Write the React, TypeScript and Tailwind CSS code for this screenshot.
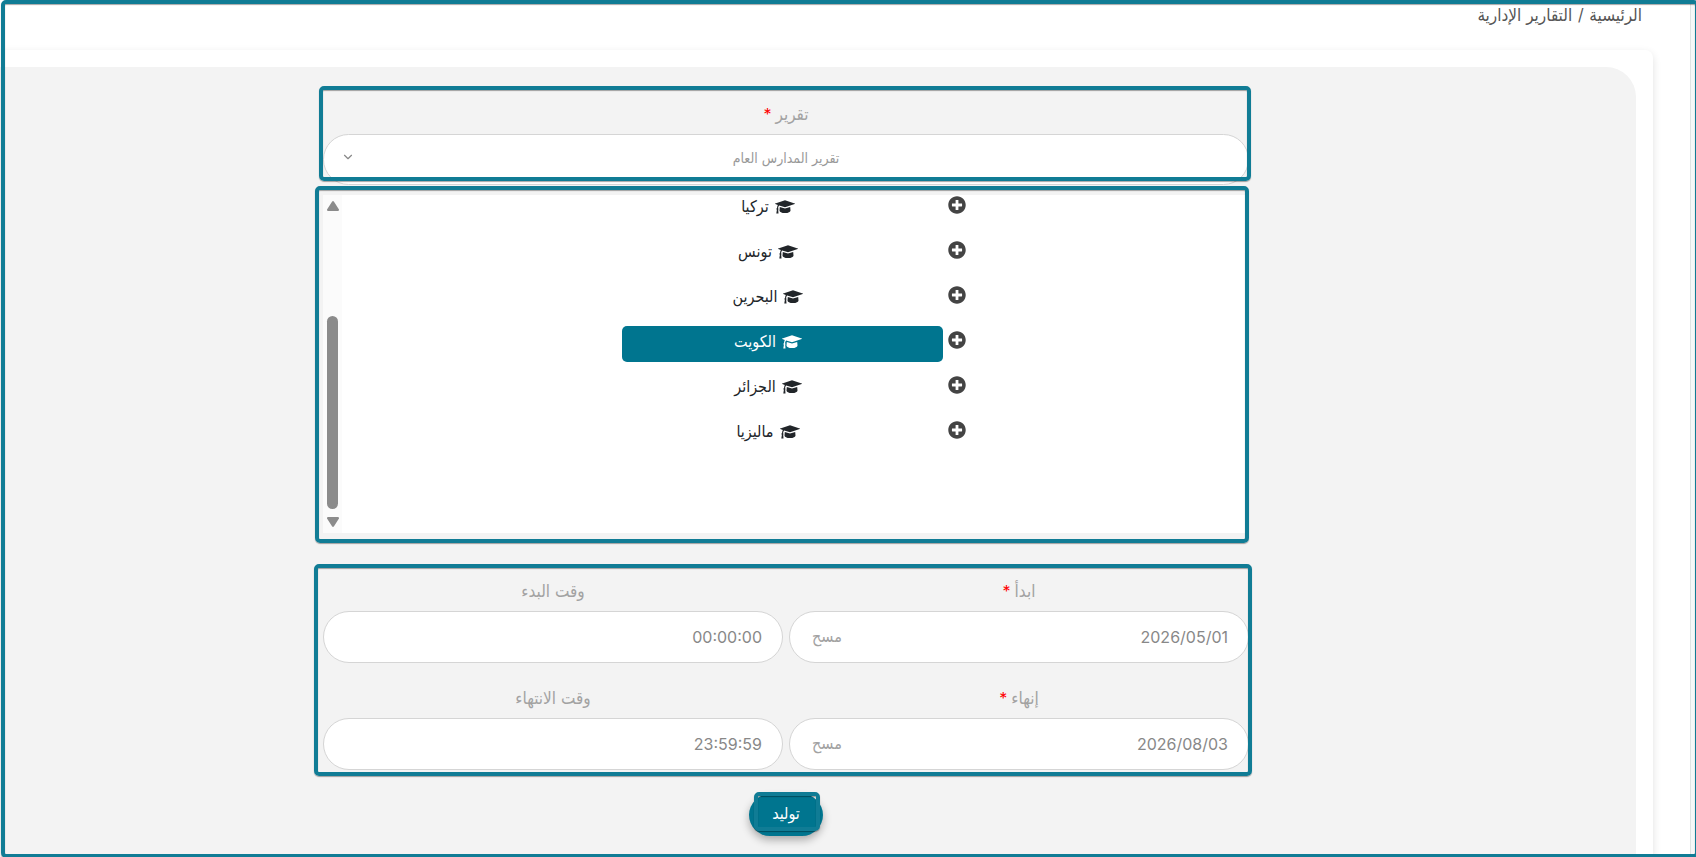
import React, { useState } from 'react';
import { FaPlusCircle } from 'react-icons/fa';
import { FiChevronDown } from 'react-icons/fi';

const countries = ['تركيا', 'تونس', 'البحرين', 'الكويت', 'الجزائر', 'ماليزيا'];

// Teal highlight drawn over a section
function Frame({ className }: { className: string }) {
  return (
    <div
      className={`pointer-events-none absolute rounded-[5px] border-4 border-[#107c95] shadow-[0_1px_1px_rgba(0,0,0,0.35),inset_0_1px_1px_rgba(0,0,0,0.35)] ${className}`}
    />
  );
}

function GraduationCap() {
  return (
    <svg viewBox="0 0 20 14" className="h-3.5 w-5" fill="currentColor" aria-hidden="true">
      <path d="M10 .3 19.7 3.4a.35.35 0 0 1 0 .7L10 7.2 4.2 5.4C3.5 6 3.2 7 3.1 8.2a1 1 0 0 1 .1 1.500L3.500 13.500H1.300L1.900 9.700a1 1 0 0 1 .1-1.600c.1-1.200.3-2.200.8-3.100L.3 4.100a.35.35 0 0 1 0-.7z" />
      <path d="M10 8.600 15.200 7 15.500 10.400c0 1.400-2.500 2.600-5.500 2.600S4.500 11.800 4.500 10.400L4.800 7z" />
    </svg>
  );
}

function Label({ id, text, required }: { id: string; text: string; required?: boolean }) {
  return (
    <label htmlFor={id} className="flex h-6 items-center justify-center gap-1 text-[17px] leading-6 text-[#a2a2a2]">
      {text}
      {required && <span className="font-['Inter',sans-serif] text-base text-[#ff0000]">*</span>}
    </label>
  );
}

interface FieldProps {
  id: string;
  label: string;
  initial: string;
  required?: boolean;
  clearable?: boolean;
}

function Field({ id, label, initial, required, clearable }: FieldProps) {
  const [value, setValue] = useState(initial);

  return (
    <div className="flex min-w-0 flex-col gap-2">
      <Label id={id} text={label} required={required} />
      <div className="flex h-[52px] items-center rounded-full border border-[#d5d5d5] bg-white pr-5 pl-[22px]">
        <input
          id={id}
          type="text"
          dir="ltr"
          value={value}
          onChange={(e) => setValue(e.target.value)}
          className="min-w-0 flex-1 bg-transparent text-right font-['Inter',sans-serif] text-base text-[#888] outline-none"
        />
        {clearable && (
          <button type="button" onClick={() => setValue('')} className="text-base leading-6 text-[#a2a2a2]">
            مسح
          </button>
        )}
      </div>
    </div>
  );
}

function App() {
  const [selected, setSelected] = useState('الكويت');

  return (
    <div
      dir="rtl"
      className="relative flex min-h-screen overflow-hidden bg-white font-['DejaVu_Sans_Condensed','DejaVu_Sans',sans-serif]"
    >
      {/* Page edge */}
      <div className="w-1.5 border-l border-[#dfe3e3] bg-[#f5f8f8]" />

      <div className="flex min-w-0 flex-1 flex-col">
        {/* Breadcrumb */}
        <nav className="flex h-[50px] gap-1.5 pt-[3px] pr-12 text-[17px] leading-6 text-[#555]">
          <a href="#">الرئيسية</a>
          <span>/</span>
          <span>التقارير الإدارية</span>
        </nav>

        {/* Card */}
        <div className="mr-[37px] flex flex-1 flex-col rounded-tr-lg bg-white pt-[17px] pr-[17px] shadow-[0_3px_8px_rgba(0,0,0,0.12)]">
          <div className="flex-1 rounded-tr-[30px] bg-[#f3f3f3] pt-[35px] pr-16">
            <form className="mx-auto flex w-full max-w-[926px] flex-col" onSubmit={(e) => e.preventDefault()}>
              {/* Report type */}
              <div className="relative flex flex-col gap-2">
                <Label id="report" text="تقرير" required />
                <div className="relative h-[51px]">
                  <select
                    id="report"
                    className="h-full w-full appearance-none rounded-full border border-[#d5d5d5] bg-white px-10 pb-1 text-center text-sm text-[#999] [text-align-last:center]"
                  >
                    <option>تقرير المدارس العام</option>
                  </select>
                  <FiChevronDown className="pointer-events-none absolute top-4 left-[18px] size-3.5 text-[#888]" />
                </div>
                <Frame className="-top-4 -right-0.5 bottom-1 -left-1" />
              </div>

              {/* Countries */}
              <div className="relative mt-2.5 flex h-[338px] bg-white">
                <ul className="-mt-1 flex flex-1 flex-col items-center gap-[9px] pr-1">
                  {countries.map((name) => (
                    <li key={name} className="flex w-[344px] gap-[5px]">
                      <button type="button" aria-label={name} className="mt-[5px] size-[18px] text-[#444]">
                        <FaPlusCircle className="size-[18px]" />
                      </button>
                      <button
                        type="button"
                        onClick={() => setSelected(name)}
                        className={`flex h-9 flex-1 items-start justify-center rounded-[5px] pt-0.5 pr-7 text-base leading-7 ${
                          name === selected ? 'bg-[#00758f] text-white' : 'text-[#212529]'
                        }`}
                      >
                        <span className="flex h-7 items-center gap-1.5">
                          <GraduationCap />
                          {name}
                        </span>
                      </button>
                    </li>
                  ))}
                </ul>
                {/* Scrollbar */}
                <div className="flex w-[19px] flex-col items-center bg-[#fbfbfb] py-1.5 text-[#8b8b8b]">
                  <svg viewBox="0 0 12 10" className="h-2.5 w-3" fill="currentColor">
                    <path d="M5 .8a1.2 1.2 0 0 1 2 0l4.8 7.4A1.1 1.1 0 0 1 11 10H1a1.1 1.1 0 0 1-.8-1.8z" />
                  </svg>
                  <div className="mt-auto mb-2 h-[193px] w-[11px] rounded-full bg-[#8b8b8b]" />
                  <svg viewBox="0 0 12 10" className="h-2.5 w-3" fill="currentColor">
                    <path d="M5 9.2a1.2 1.2 0 0 0 2 0l4.8-7.4A1.1 1.1 0 0 0 11 0H1a1.1 1.1 0 0 0-.8 1.8z" />
                  </svg>
                </div>
                <Frame className="-top-[9px] right-0 -bottom-[10px] -left-2" />
              </div>

              {/* Dates and times */}
              <div className="relative mt-[46px] grid grid-cols-2 gap-x-1.5 gap-y-[23px]">
                <Field id="start-date" label="ابدأ" initial="2026/05/01" required clearable />
                <Field id="start-time" label="وقت البدء" initial="00:00:00" />
                <Field id="end-date" label="إنهاء" initial="2026/08/03" required clearable />
                <Field id="end-time" label="وقت الانتهاء" initial="23:59:59" />
                <Frame className="-top-[15px] -right-[3px] -bottom-1.5 -left-[9px]" />
              </div>

              <button
                type="submit"
                className="relative mx-auto mt-6 h-[42px] w-[74px] rounded-full bg-[#00758f] pb-0.5 text-base text-white shadow-[0_4px_8px_rgba(0,0,0,0.3)]"
              >
                توليد
                <Frame className="-top-0.5 right-[3px] bottom-[5px] left-[5px]" />
              </button>
            </form>
          </div>
        </div>
      </div>

      <Frame className="top-0 -right-[3px] -bottom-px left-px" />
    </div>
  );
}

export default App;
